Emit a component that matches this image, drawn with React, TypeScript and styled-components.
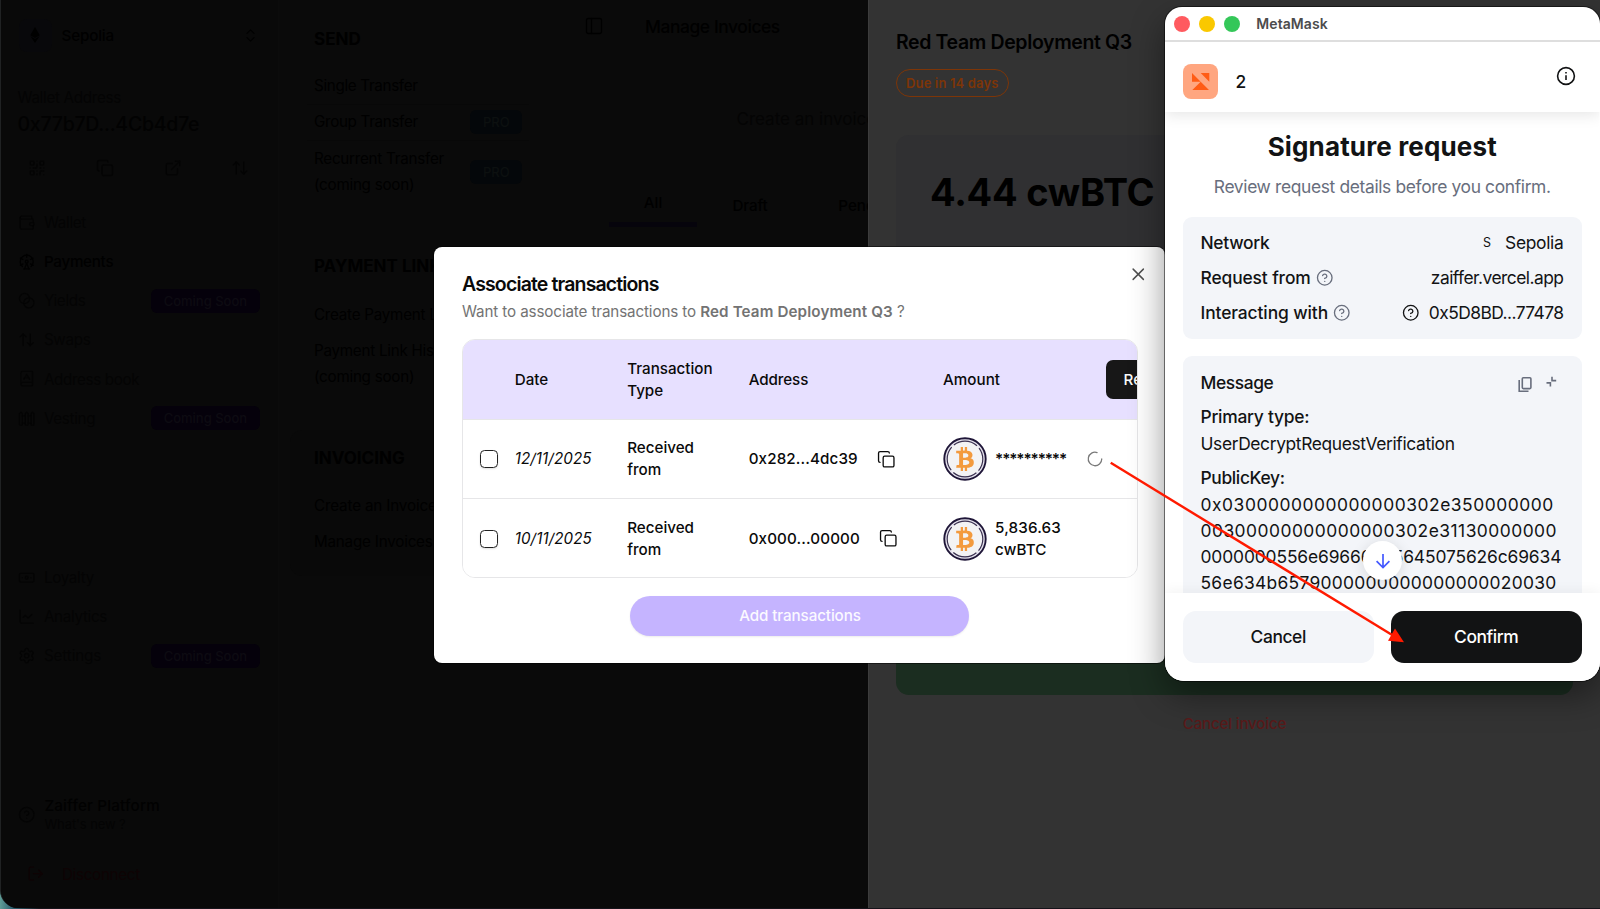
import type { ComponentType } from "react";
import {
  ArrowUpDown,
  Banknote,
  Blend,
  BookA,
  ChartLine,
  ChevronsUpDown,
  CircleHelp,
  Copy,
  ExternalLink,
  Fence,
  FerrisWheel,
  LoaderCircle,
  LogOut,
  PanelLeft,
  QrCode,
  Settings,
  Wallet,
  X,
} from "lucide-react";
import { FaBtc } from "react-icons/fa";
import { FaEthereum } from "react-icons/fa6";
import styled, { createGlobalStyle } from "styled-components";

const GlobalStyle = createGlobalStyle`
  *, *::before, *::after {
    box-sizing: border-box;
  }
  html, body {
    margin: 0;
    background: #0a0a0a;
    overflow: hidden;
  }
  body {
    font-family: Inter, "Liberation Sans", sans-serif;
    font-size: 15.2px;
  }
  button {
    font: inherit;
    border: 0;
    padding: 0;
  }
`;

type TextProps = { $size?: number; $weight?: number; $ls?: number; $color?: string };

const Text = styled.span<TextProps>`
  font-size: ${(props) => props.$size ?? 15.2}px;
  font-weight: ${(props) => props.$weight ?? 400};
  letter-spacing: ${(props) => props.$ls ?? 0}px;
  color: ${(props) => props.$color ?? "inherit"};
  white-space: nowrap;
`;

const Desktop = styled.div`
  position: relative;
  width: 1600px;
  height: 909px;
  overflow: hidden;
  background: linear-gradient(90deg, #5f9c96 0, #2d6070 12px, #15131a 40px);
`;

const AppWindow = styled.div`
  display: flex;
  width: 1600px;
  height: 908px;
  background: #0a0a0a;
  border-left: 1px solid #202223;
  border-bottom-left-radius: 18px;
  overflow: hidden;
`;

/* ---------- sidebar ---------- */

const SidebarBox = styled.aside`
  display: flex;
  flex-direction: column;
  flex: none;
  width: 278px;
  padding: 18px 18.5px 17px 16.5px;
  background: #090909;
  border-right: 1px solid #0b0b0b;
  color: #040404;
`;

const NetworkSwitch = styled.div`
  display: flex;
  align-items: center;
  height: 34px;
  padding: 0 0.5px 0 1px;
  color: #000;
`;

const NetworkLogo = styled.div`
  display: flex;
  align-items: center;
  justify-content: center;
  width: 33px;
  height: 33px;
  margin-right: 10px;
  border-radius: 8px;
  background: #08080b;
`;

const SwitchIcon = styled.div`
  display: flex;
  margin-left: auto;
`;

const WalletBlock = styled.div`
  display: flex;
  flex-direction: column;
  margin-top: 36px;
  line-height: 20px;
`;

const WalletAddress = styled(Text)`
  margin-top: 2px;
  line-height: 28px;
`;

const WalletActions = styled.div`
  display: flex;
  justify-content: space-between;
  align-items: center;
  height: 24px;
  margin-top: 18px;
  padding: 0 10px 0 10.5px;
`;

const NavList = styled.nav<{ $top: number }>`
  margin-top: ${(props) => props.$top}px;
`;

const NavRow = styled.div<{ $active?: boolean }>`
  display: flex;
  align-items: center;
  height: 39.2px;
  color: ${(props) => (props.$active ? "#000" : "#040404")};
  svg {
    margin-right: 9px;
  }
`;

const Badge = styled.span<{ $tone: "purple" | "blue" }>`
  display: flex;
  align-items: center;
  justify-content: center;
  height: 24px;
  margin-left: auto;
  padding: 0 12.4px;
  border-radius: 6px;
  font-size: 13px;
  font-weight: 500;
  white-space: nowrap;
  background: ${(props) => (props.$tone === "purple" ? "#05010b" : "#04070a")};
  color: ${(props) => (props.$tone === "purple" ? "#0d0b12" : "#0c1010")};
`;

const PlatformRow = styled.div`
  display: flex;
  align-items: center;
  margin-top: auto;
  gap: 9.5px;
`;

const PlatformText = styled.div`
  display: flex;
  flex-direction: column;
  line-height: 18px;
`;

const DisconnectRow = styled.div`
  display: flex;
  align-items: center;
  height: 34px;
  margin-top: 24px;
  padding-left: 9px;
  gap: 18px;
  color: #0e0304;
`;

/* ---------- payments menu ---------- */

const MenuColumn = styled.div`
  display: flex;
  flex-direction: column;
  flex: none;
  gap: 18.6px;
  width: 270px;
  padding: 10px 8px 0 11px;
  color: #000;
`;

const MenuGroupBox = styled.section<{ $current?: boolean }>`
  padding: 16.5px 12px 16px 17px;
  border-radius: 12px;
  background: ${(props) => (props.$current ? "#090909" : "transparent")};
`;

const MenuTitle = styled.h3`
  margin: 0 0 18.5px 7px;
  font-size: 17px;
  font-weight: 700;
  line-height: 24px;
  white-space: nowrap;
`;

const MenuItem = styled.div<{ $line?: boolean }>`
  display: flex;
  align-items: center;
  justify-content: space-between;
  padding: ${(props) => (props.$line ? 4.4 : 4.9)}px 7px;
  line-height: 26.2px;
  border-bottom: ${(props) => (props.$line ? "1px solid #080808" : "0")};
`;

/* ---------- invoices page ---------- */

const Main = styled.main`
  flex: none;
  width: 320px;
  overflow: hidden;
  color: #000;
`;

const MainHeader = styled.header`
  display: flex;
  align-items: center;
  height: 52px;
  padding-left: 35px;
  gap: 41px;
`;

const CreateHint = styled.div`
  height: 28px;
  margin-top: 52.5px;
  padding-left: 187.5px;
  line-height: 28px;
  white-space: nowrap;
  color: #040404;
`;

const Tabs = styled.div`
  display: flex;
  margin-top: 58px;
  padding-left: 60px;
`;

const Tab = styled.div<{ $active?: boolean; $width: number }>`
  flex: none;
  width: ${(props) => props.$width}px;
  height: 36px;
  padding-top: ${(props) => (props.$active ? 0.5 : 3)}px;
  line-height: 24px;
  text-align: center;
  border-bottom: 5px solid ${(props) => (props.$active ? "#06040c" : "transparent")};
`;

/* ---------- invoice drawer ---------- */

const Drawer = styled.section`
  position: absolute;
  top: 0;
  left: 868px;
  width: 732px;
  height: 908px;
  padding: 28px 27px 0 27px;
  background: #333;
  border-left: 1px solid #3c3c3c;
  color: #000;
`;

const DrawerTitle = styled(Text)`
  display: block;
  line-height: 28px;
`;

const DuePill = styled.div`
  display: inline-flex;
  align-items: center;
  height: 28px;
  margin-top: 13px;
  padding: 0 9.3px 0 9px;
  border: 1.2px solid #7d3507;
  border-radius: 14px;
  color: #7d3507;
`;

const AmountCard = styled.div`
  display: flex;
  height: 400px;
  margin-top: 38px;
  padding: 29px 34px;
  border-radius: 13px;
  background: #303032;
  line-height: 56px;
`;

const PayButton = styled.button`
  display: block;
  width: 677px;
  height: 44px;
  margin-top: 116px;
  border-radius: 13px;
  background: #1b2d20;
`;

const CancelInvoice = styled.div`
  margin-top: 16.5px;
  line-height: 24px;
  text-align: center;
  color: #5a1a1a;
`;

/* ---------- associate transactions dialog ---------- */

const Dialog = styled.section`
  position: absolute;
  top: 246.5px;
  left: 434.3px;
  display: flex;
  flex-direction: column;
  width: 730.7px;
  height: 416px;
  padding: 23.5px 27px 0 27.7px;
  border-radius: 8px;
  background: #fff;
  box-shadow: 0 0 0 1px rgba(0, 0, 0, 0.5);
  color: #0a0a0a;
`;

const CloseButton = styled.button`
  position: absolute;
  top: 17px;
  right: 16.5px;
  display: flex;
  background: none;
  color: #505050;
`;

const DialogTitle = styled(Text)`
  line-height: 28px;
`;

const DialogSubtitle = styled.p`
  margin: 0;
  padding-top: 0.5px;
  line-height: 26px;
  color: #737373;
`;

const Table = styled.div`
  flex: none;
  width: 676px;
  margin-top: 14.7px;
  border: 1px solid #e6e6e8;
  border-radius: 13px;
  overflow: hidden;
`;

const TableRow = styled.div<{ $head?: boolean }>`
  display: grid;
  grid-template-columns: 51.7px 112.5px 121.5px 194.4px 163px 120px;
  align-items: center;
  height: 79.4px;
  line-height: 21.8px;
  font-weight: 500;
  background: ${(props) => (props.$head ? "#e7e0ff" : "#fff")};
  border-bottom: 1px solid #e6e6e8;
  > * {
    position: relative;
    top: 0.4px;
  }
  &:last-child {
    border-bottom: 0;
    height: 78.5px;
  }
`;

const Checkbox = styled.span`
  display: block;
  width: 18px;
  height: 18px;
  margin-left: 16.7px;
  border: 1px solid #222;
  border-radius: 4.5px;
  box-shadow: 0 1px 2px rgba(0, 0, 0, 0.12);
`;

const TableDate = styled.span`
  font-style: italic;
  font-weight: 400;
  letter-spacing: 0.08px;
`;

const Inline = styled.div<{ $gap: number }>`
  display: flex;
  align-items: center;
  gap: ${(props) => props.$gap}px;
`;

const Stars = styled.span`
  font-size: 15.2px;
  font-weight: 600;
  letter-spacing: -1.1px;
  margin-right: 20px;
`;

const RevealButton = styled.button`
  width: 110px;
  height: 39.3px;
  padding-left: 17.5px;
  border-radius: 7px;
  background: #171717;
  color: #fafafa;
  font-weight: 500;
  text-align: left;
`;

const AddButton = styled.button`
  align-self: center;
  flex: none;
  width: 339px;
  height: 39.3px;
  margin-top: 17.8px;
  border-radius: 20px;
  background: #c5b4ff;
  color: #fbf9ff;
  font-weight: 500;
  letter-spacing: -0.1px;
  box-shadow: 0 1px 2px rgba(0, 0, 0, 0.08);
`;

const CoinBox = styled.div`
  display: grid;
  place-items: center;
  width: 44px;
  height: 44px;
  color: #f39a3d;
  > svg {
    grid-area: 1 / 1;
  }
`;

const Coin = () => (
  <CoinBox>
    <svg width="44" height="44" viewBox="0 0 44 44" fill="none">
      <circle cx="22" cy="22" r="20.7" fill="#e6e3ee" stroke="#1f1638" strokeWidth="1.9" />
      <circle
        cx="22"
        cy="22"
        r="17.8"
        fill="#f3f3f4"
        stroke="#3a3150"
        strokeWidth="1.2"
        strokeDasharray="24.96 3"
        strokeDashoffset="-15.5"
      />
    </svg>
    <FaBtc size={24} />
  </CoinBox>
);

/* ---------- wallet extension window ---------- */

const WalletWindow = styled.section`
  position: absolute;
  top: 6.5px;
  left: 1165px;
  z-index: 1;
  display: flex;
  flex-direction: column;
  width: 434.5px;
  height: 674.5px;
  border-radius: 17px 17px 19px 19px;
  background: #fff;
  color: #121314;
  overflow: hidden;
`;

const WalletShadow = styled.div`
  position: absolute;
  top: 6.5px;
  left: 1165px;
  width: 434.5px;
  height: 674.5px;
  border-radius: 17px 17px 19px 19px;
  box-shadow: 0 0 0 1px rgba(0, 0, 0, 0.5), 0 14px 34px rgba(0, 0, 0, 0.42);
`;

const TitleBar = styled.header`
  display: flex;
  align-items: center;
  flex: none;
  height: 35.8px;
  padding: 1px 0 0 9px;
  gap: 9px;
  border-bottom: 2px solid #dedede;
`;

const Light = styled.span<{ $color: string }>`
  width: 16px;
  height: 16px;
  border-radius: 50%;
  background: ${(props) => props.$color};
`;

const WindowTitle = styled(Text)`
  margin-left: 7.3px;
  color: #4c4c4c;
`;

const AccountBar = styled.div`
  z-index: 1;
  display: flex;
  align-items: center;
  flex: none;
  height: 69.7px;
  padding: 8px 23.5px 0 18px;
  box-shadow: 0 3px 14px rgba(0, 0, 0, 0.1);
  clip-path: inset(0 0 -24px 0);
`;

const Avatar = styled.div`
  display: flex;
  width: 35px;
  height: 35px;
  margin-right: 17.5px;
  border-radius: 8px;
  background: #ffa680;
`;

const InfoButton = styled.div`
  display: flex;
  margin: -10px 0 0 auto;
`;

const RequestBody = styled.div`
  position: relative;
  display: flex;
  flex-direction: column;
  flex: 1;
  min-height: 0;
  padding: 17.5px 18px 0;
  overflow: hidden;
`;

const RequestTitle = styled(Text)`
  line-height: 36px;
  text-align: center;
`;

const RequestHint = styled(Text)`
  margin-top: 8.5px;
  line-height: 26px;
  text-align: center;
  color: #686e7d;
`;

const Card = styled.div<{ $top: number; $height: number }>`
  flex: none;
  height: ${(props) => props.$height}px;
  margin-top: ${(props) => props.$top}px;
  padding: 8.3px 18px 0 17.5px;
  border-radius: 9px;
  background: #f3f5f9;
  font-size: 17.4px;
`;

const CardRow = styled.div`
  display: flex;
  align-items: center;
  height: 35px;
  color: #121314;
`;

const RowValue = styled.div`
  display: flex;
  align-items: center;
  gap: 9px;
  margin-left: auto;
`;

const HelpIcon = styled(CircleHelp).attrs({ size: 17.5, strokeWidth: 1.8 })<{ $muted?: boolean }>`
  margin-left: 5px;
  color: ${(props) => (props.$muted ? "#686e7d" : "#121314")};
`;

const NetworkInitial = styled.span`
  width: 8px;
  margin-right: 5px;
  font-size: 12.5px;
  text-align: center;
`;

const MessageTools = styled.div`
  display: flex;
  margin: 3px 6px 0 auto;
`;

const Field = styled.div`
  margin-top: 4.8px;
  margin-bottom: 8.8px;
  & + & {
    margin-top: 0;
  }
`;

const FieldLine = styled.div`
  height: 26.1px;
  line-height: 26.1px;
`;

const ScrollDown = styled.div`
  position: absolute;
  left: 198px;
  bottom: 13px;
  display: flex;
  align-items: center;
  justify-content: center;
  width: 39px;
  height: 39px;
  border-radius: 50%;
  background: #fff;
  box-shadow: 0 2px 14px rgba(0, 0, 0, 0.12);
`;

const RequestFooter = styled.footer`
  z-index: 1;
  display: flex;
  flex: none;
  gap: 17.5px;
  height: 88px;
  padding: 18px;
  background: #fff;
  box-shadow: 0 -2px 12px rgba(0, 0, 0, 0.05);
`;

const FooterButton = styled.button<{ $primary?: boolean }>`
  flex: 1;
  height: 52px;
  padding-bottom: 1.5px;
  border-radius: 13px;
  font-size: 17.4px;
  font-weight: 500;
  letter-spacing: ${(props) => (props.$primary ? -0.4 : -0.41)}px;
  background: ${(props) => (props.$primary ? "#121314" : "#f3f5f9")};
  color: ${(props) => (props.$primary ? "#fff" : "#121314")};
`;

const Pointer = styled.svg`
  position: absolute;
  top: 0;
  left: 0;
  z-index: 2;
`;

type NavEntry = {
  icon: ComponentType<{ size?: number; strokeWidth?: number }>;
  label: string;
  ls: number;
  active?: boolean;
  soon?: boolean;
};

const mainNav: NavEntry[] = [
  { icon: Wallet, label: "Wallet", ls: -0.3 },
  { icon: FerrisWheel, label: "Payments", ls: -0.27, active: true },
  { icon: Blend, label: "Yields", ls: -0.3, soon: true },
  { icon: ArrowUpDown, label: "Swaps", ls: -0.3 },
  { icon: BookA, label: "Address book", ls: -0.35 },
  { icon: Fence, label: "Vesting", ls: -0.3, soon: true },
];

const extraNav: NavEntry[] = [
  { icon: Banknote, label: "Loyalty", ls: -0.3 },
  { icon: ChartLine, label: "Analytics", ls: -0.3 },
  { icon: Settings, label: "Settings", ls: -0.1, soon: true },
];

const Nav = ({ items, top }: { items: NavEntry[]; top: number }) => (
  <NavList $top={top}>
    {items.map(({ icon: Icon, label, ls, active, soon }) => (
      <NavRow key={label} $active={active}>
        <Icon size={17.4} strokeWidth={1.8} />
        <Text $weight={active ? 500 : 400} $ls={ls}>
          {label}
        </Text>
        {soon && <Badge $tone="purple">Coming Soon</Badge>}
      </NavRow>
    ))}
  </NavList>
);

const Sidebar = () => (
  <SidebarBox>
    <NetworkSwitch>
      <NetworkLogo>
        <FaEthereum size={16} />
      </NetworkLogo>
      <Text $weight={500} $ls={-0.15}>
        Sepolia
      </Text>
      <SwitchIcon>
        <ChevronsUpDown size={17} strokeWidth={1.6} />
      </SwitchIcon>
    </NetworkSwitch>
    <WalletBlock>
      <Text $ls={-0.3}>Wallet Address</Text>
      <WalletAddress $size={19.5} $weight={500} $ls={-0.24} $color="#020202">
        0x77b7D...4Cb4d7e
      </WalletAddress>
    </WalletBlock>
    <WalletActions>
      <QrCode size={18} strokeWidth={1.8} />
      <Copy size={18} strokeWidth={1.8} />
      <ExternalLink size={18} strokeWidth={1.8} />
      <ArrowUpDown size={18} strokeWidth={1.8} />
    </WalletActions>
    <Nav items={mainNav} top={22.8} />
    <Nav items={extraNav} top={119.8} />
    <PlatformRow>
      <CircleHelp size={17.4} strokeWidth={1.8} />
      <PlatformText>
        <Text $weight={500} $ls={0.18} $color="#010101">
          Zaiffer Platform
        </Text>
        <Text $size={13} $ls={-0.1}>
          What's new ?
        </Text>
      </PlatformText>
    </PlatformRow>
    <DisconnectRow>
      <LogOut size={17.4} strokeWidth={1.8} />
      <Text $ls={-0.29}>Disconnect</Text>
    </DisconnectRow>
  </SidebarBox>
);

const PaymentsMenu = () => (
  <MenuColumn>
    <MenuGroupBox>
      <MenuTitle>SEND</MenuTitle>
      <MenuItem $line>
        <Text $ls={-0.32}>Single Transfer</Text>
      </MenuItem>
      <MenuItem $line>
        <Text $ls={-0.32}>Group Transfer</Text>
        <Badge $tone="blue">PRO</Badge>
      </MenuItem>
      <MenuItem>
        <Text $ls={-0.25}>
          Recurrent Transfer
          <br />
          (coming soon)
        </Text>
        <Badge $tone="blue">PRO</Badge>
      </MenuItem>
    </MenuGroupBox>
    <MenuGroupBox>
      <MenuTitle>PAYMENT LINK</MenuTitle>
      <MenuItem>
        <Text $ls={-0.25}>Create Payment Link</Text>
      </MenuItem>
      <MenuItem>
        <Text $ls={-0.25}>
          Payment Link History
          <br />
          (coming soon)
        </Text>
      </MenuItem>
    </MenuGroupBox>
    <MenuGroupBox $current>
      <MenuTitle>INVOICING</MenuTitle>
      <MenuItem>
        <Text $ls={-0.15}>Create an Invoice</Text>
      </MenuItem>
      <MenuItem>
        <Text $ls={-0.2}>Manage Invoices</Text>
      </MenuItem>
    </MenuGroupBox>
  </MenuColumn>
);

const transactions = [
  { date: "12/11/2025", address: "0x282...4dc39" },
  { date: "10/11/2025", address: "0x000...00000", amount: "5,836.63" },
];

const AssociateDialog = () => (
  <Dialog>
    <CloseButton aria-label="Close">
      <X size={20.5} strokeWidth={1.7} />
    </CloseButton>
    <DialogTitle $size={19.5} $weight={600} $ls={-0.86}>
      Associate transactions
    </DialogTitle>
    <DialogSubtitle>
      <Text $ls={-0.12}>Want to associate transactions to </Text>
      <Text $weight={600} $ls={0.12}>
        Red Team Deployment Q3
      </Text>
      <Text> ?</Text>
    </DialogSubtitle>
    <Table>
      <TableRow $head>
        <span />
        <span>Date</span>
        <span>
          Transaction
          <br />
          Type
        </span>
        <Text $weight={500} $ls={-0.1}>
          Address
        </Text>
        <span>Amount</span>
        <RevealButton>Reveal all</RevealButton>
      </TableRow>
      {transactions.map((tx) => (
        <TableRow key={tx.date}>
          <Checkbox />
          <TableDate>{tx.date}</TableDate>
          <Text $weight={500}>
            Received
            <br />
            from
          </Text>
          <Inline $gap={19.5}>
            <Text $weight={500} $ls={0.12}>
              {tx.address}
            </Text>
            <Copy size={18.5} strokeWidth={1.7} />
          </Inline>
          <Inline $gap={8}>
            <Coin />
            {tx.amount ? (
              <Text $weight={500} $ls={0.15}>
                {tx.amount}
                <br />
                cwBTC
              </Text>
            ) : (
              <Inline $gap={0}>
                <Stars>**********</Stars>
                <LoaderCircle size={18} strokeWidth={1.7} color="#7a7a7a" />
              </Inline>
            )}
          </Inline>
        </TableRow>
      ))}
    </Table>
    <AddButton>Add transactions</AddButton>
  </Dialog>
);

const publicKeyLines = [
  { text: "0x0300000000000000302e350000000", ls: 0.55 },
  { text: "00300000000000000302e31130000000", ls: 0.48 },
  { text: "0000000556e69666965645075626c69634", ls: -0.12 },
  { text: "56e634b6579000000000000000020030", ls: 0.3 },
];

const SignatureRequest = () => (
  <WalletWindow>
    <TitleBar>
      <Light $color="#ff5a5f" />
      <Light $color="#fac800" />
      <Light $color="#34c759" />
      <WindowTitle $size={14} $weight={600} $ls={0.08}>
        MetaMask
      </WindowTitle>
    </TitleBar>
    <AccountBar>
      <Avatar>
        <svg width="35" height="35" viewBox="0 0 35 35" fill="#ff5c16">
          <path d="M9 9L17.7 17.7H9ZM17.7 9H26.3V17.7ZM9.3 26L17.7 17.7L26 26Z" />
        </svg>
      </Avatar>
      <Text $size={17.4} $weight={500}>
        2
      </Text>
      <InfoButton>
        <svg width="20" height="20" viewBox="0 0 20 20" fill="none" stroke="#121314" strokeWidth="1.6">
          <circle cx="10" cy="10" r="8.4" />
          <path d="M10 9.2V14M10 6V7.6" />
        </svg>
      </InfoButton>
    </AccountBar>
    <RequestBody>
      <RequestTitle $size={26} $weight={700} $ls={0.15}>
        Signature request
      </RequestTitle>
      <RequestHint $size={17.4} $ls={-0.35}>
        Review request details before you confirm.
      </RequestHint>
      <Card $top={17} $height={121.7}>
        <CardRow>
          <Text $size={17.4} $weight={500} $ls={-0.3}>
            Network
          </Text>
          <RowValue>
            <NetworkInitial>S</NetworkInitial>
            <Text $size={17.4} $ls={-0.3}>
              Sepolia
            </Text>
          </RowValue>
        </CardRow>
        <CardRow>
          <Text $size={17.4} $weight={500} $ls={-0.12}>
            Request from
          </Text>
          <HelpIcon $muted />
          <RowValue>
            <Text $size={17.4} $ls={-0.52}>
              zaiffer.vercel.app
            </Text>
          </RowValue>
        </CardRow>
        <CardRow>
          <Text $size={17.4} $weight={500} $ls={-0.1}>
            Interacting with
          </Text>
          <HelpIcon $muted />
          <RowValue>
            <HelpIcon />
            <Text $size={17.4} $ls={-0.55}>
              0x5D8BD...77478
            </Text>
          </RowValue>
        </CardRow>
      </Card>
      <Card $top={17.7} $height={420}>
        <CardRow>
          <Text $size={17.4} $weight={500} $ls={-0.4}>
            Message
          </Text>
          <MessageTools>
            <svg width="40" height="18" viewBox="0 0 40 18" fill="none" stroke="#686e7d" strokeWidth="1.6">
              <rect x="4.3" y="2.8" width="8.6" height="10.8" rx="1" />
              <path d="M1.2 5V16.2H10.5M34 1.8V5.6H38.2M28.5 7.9H32.4V11.6" />
            </svg>
          </MessageTools>
        </CardRow>
        <Field>
          <FieldLine>
            <Text $size={17.4} $weight={500} $ls={-0.25}>
              Primary type:
            </Text>
          </FieldLine>
          <FieldLine>
            <Text $size={17.4} $ls={-0.36}>
              UserDecryptRequestVerification
            </Text>
          </FieldLine>
        </Field>
        <Field>
          <FieldLine>
            <Text $size={17.4} $weight={500} $ls={-0.35}>
              PublicKey:
            </Text>
          </FieldLine>
          {publicKeyLines.map((line) => (
            <FieldLine key={line.text}>
              <Text $size={17.4} $ls={line.ls}>
                {line.text}
              </Text>
            </FieldLine>
          ))}
        </Field>
      </Card>
      <ScrollDown>
        <svg width="18" height="18" viewBox="0 0 18 18" fill="none" stroke="#4459ff" strokeWidth="1.7">
          <path d="M9 2V15.5M2.6 9.2L9 15.6L15.4 9.2" />
        </svg>
      </ScrollDown>
    </RequestBody>
    <RequestFooter>
      <FooterButton>Cancel</FooterButton>
      <FooterButton $primary>Confirm</FooterButton>
    </RequestFooter>
  </WalletWindow>
);

const App = () => {
  return (
    <Desktop>
      <GlobalStyle />
      <AppWindow>
        <Sidebar />
        <PaymentsMenu />
        <Main>
          <MainHeader>
            <PanelLeft size={20} strokeWidth={1.6} />
            <Text $size={17.4} $weight={500} $ls={-0.4}>
              Manage Invoices
            </Text>
          </MainHeader>
          <CreateHint>
            <Text $size={17}>Create an invoice</Text>
          </CreateHint>
          <Tabs>
            <Tab $active $width={88}>
              <Text $weight={500}>All</Text>
            </Tab>
            <Tab $width={106}>
              <Text $weight={500} $ls={-0.12}>
                Draft
              </Text>
            </Tab>
            <Tab $width={130}>
              <Text $weight={500}>Pending</Text>
            </Tab>
          </Tabs>
        </Main>
      </AppWindow>
      <Drawer>
        <DrawerTitle $size={19.5} $weight={600} $ls={-0.37}>
          Red Team Deployment Q3
        </DrawerTitle>
        <DuePill>
          <Text $size={13} $weight={600} $ls={0.14}>
            Due in 14 days
          </Text>
        </DuePill>
        <AmountCard>
          <Text $size={38} $weight={700} $ls={-0.25}>
            4.44 cwBTC
          </Text>
        </AmountCard>
        <PayButton aria-label="Pay" />
        <CancelInvoice>
          <Text $weight={500} $ls={-0.2}>
            Cancel invoice
          </Text>
        </CancelInvoice>
      </Drawer>
      <AssociateDialog />
      <WalletShadow />
      <SignatureRequest />
      <Pointer width="1600" height="909" viewBox="0 0 1600 909">
        <path d="M1110.7 462.8L1393 635.5" stroke="#ff1a00" strokeWidth="2.4" />
        <path d="M1395 628.5L1388 640.7L1404 642.2Z" fill="#ff1a00" />
      </Pointer>
    </Desktop>
  );
};

export default App;
